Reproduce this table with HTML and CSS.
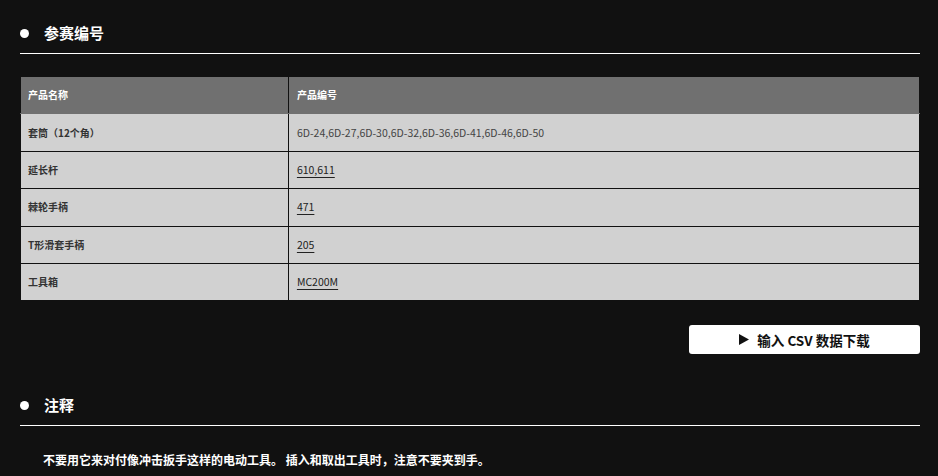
FILE: index.html
```html
<!DOCTYPE html>
<html lang="zh-CN">
<head>
  <meta charset="UTF-8">
  <title>参赛编号</title>
  <link rel="stylesheet" href="styles.css">
</head>
<body>

<div class="page">
  <div class="section">
    <h2 class="section-title"><span class="dot"></span>参赛编号</h2>

    <table class="spec-table">
      <thead>
        <tr>
          <th class="col-name">产品名称</th>
          <th>产品编号</th>
        </tr>
      </thead>
      <tbody>
        <tr>
          <td class="col-name">套筒（12个角）</td>
          <td>6D-24,6D-27,6D-30,6D-32,6D-36,6D-41,6D-46,6D-50</td>
        </tr>
        <tr>
          <td class="col-name">延长杆</td>
          <td><a href="#">610,611</a></td>
        </tr>
        <tr>
          <td class="col-name">棘轮手柄</td>
          <td><a href="#">471</a></td>
        </tr>
        <tr>
          <td class="col-name">T形滑套手柄</td>
          <td><a href="#">205</a></td>
        </tr>
        <tr>
          <td class="col-name">工具箱</td>
          <td><a href="#">MC200M</a></td>
        </tr>
      </tbody>
    </table>

    <div class="actions">
      <button class="csv-btn" type="button">
        <svg class="play" width="10" height="11" viewBox="0 0 10 11"><polygon points="0,0 10,5.5 0,11" fill="#111"/></svg>
        输入 CSV 数据下载
      </button>
    </div>
  </div>

  <div class="section section-notes">
    <h2 class="section-title"><span class="dot"></span>注释</h2>
    <p class="note">不要用它来对付像冲击扳手这样的电动工具。 插入和取出工具时，注意不要夹到手。</p>
  </div>
</div>

</body>
</html>
```

FILE: styles.css
```css
body {
  margin: 0;
  background-color: #111111;
  color: #ffffff;
  font-family: "Noto Sans CJK SC", "Noto Sans", sans-serif;
}
.page {
  padding: 0 18px 0 20px;
}
.section-title {
  display: flex;
  align-items: center;
  gap: 15px;
  margin: 0;
  padding: 22px 0 9px 0;
  font-size: 15px;
  line-height: 22px;
  font-weight: bold;
  border-bottom: 1px solid #ffffff;
}
.dot {
  width: 9px;
  height: 9px;
  border-radius: 50%;
  background-color: #ffffff;
}
.spec-table {
  width: 100%;
  margin-top: 22px;
  border-collapse: collapse;
  border: 1px solid #111111;
  font-size: 10.5px;
  line-height: 16px;
}
.spec-table th,
.spec-table td {
  height: 36.4px;
  padding: 0 8px;
  text-align: left;
  border: 1px solid #111111;
}
.spec-table th {
  background-color: #707070;
  color: #ffffff;
  font-weight: bold;
  font-size: 10px;
  border-bottom-color: #707070;
}
.spec-table td {
  background-color: #d1d1d1;
  color: #444444;
}
.spec-table .col-name {
  width: 29.8%;
  padding-left: 7px;
}
.spec-table td.col-name {
  color: #333333;
  font-size: 10px;
  font-weight: bold;
}
.spec-table a {
  color: #222222;
  text-decoration: underline;
  text-underline-offset: 3px;
}
.actions {
  display: flex;
  justify-content: flex-end;
  margin-top: 24px;
}
.csv-btn {
  display: flex;
  align-items: center;
  justify-content: center;
  gap: 8px;
  width: 231px;
  height: 29px;
  padding: 0 0 0 0;
  border: none;
  border-radius: 3px;
  background-color: #ffffff;
  color: #111111;
  font-family: inherit;
  font-size: 13.5px;
  font-weight: bold;
  cursor: pointer;
}
.section-notes {
  margin-top: 18px;
}
.note {
  margin: 25px 0 0 0;
  padding-left: 23px;
  font-size: 12px;
  line-height: 18px;
  font-weight: bold;
}
```
